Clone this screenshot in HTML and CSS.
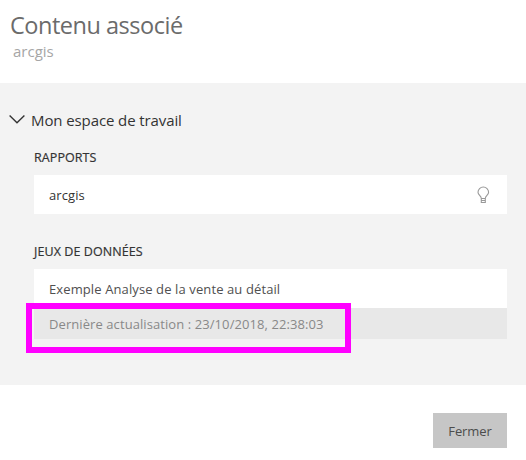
FILE: index.html
```html
<!DOCTYPE html>
<html lang="fr">
<head>
<meta charset="utf-8">
<title>Contenu associé</title>
<link rel="stylesheet" href="styles.css">
</head>
<body>
<div class="dialog">
  <header class="header">
    <h1 class="title"><span>Contenu associé</span></h1>
    <p class="subtitle"><span>arcgis</span></p>
  </header>
  <main class="panel">
    <div class="workspace">
      <svg class="chevron" width="16" height="10" viewBox="0 0 16 10"><path d="M.6.600 8 7.700l7.400-7.100"/></svg>
      <span class="workspace-name">Mon espace de travail</span>
    </div>
    <section class="group">
      <h2 class="group-title reports"><span>RAPPORTS</span></h2>
      <div class="card">
        <span class="report-name">arcgis</span>
        <svg class="bulb" width="13" height="18" viewBox="0 0 13 18"><path d="M4.300 12.500C4.300 9.800 1 9 1 6.300a5.300 5.300 0 0 1 10.600 0c0 2.700-3.300 3.500-3.300 6.200zM4.300 12.500v4h4v-4M4.300 14.500h4"/></svg>
      </div>
    </section>
    <section class="group">
      <h2 class="group-title datasets"><span>JEUX DE DONNÉES</span></h2>
      <div class="card">
        <span class="dataset-name">Exemple Analyse de la vente au détail</span>
      </div>
      <div class="refresh">
        <span class="refresh-text">Dernière actualisation : 23/10/2018, 22:38:03</span>
        <div class="highlight"></div>
      </div>
    </section>
  </main>
  <footer class="footer">
    <button class="close" type="button"><span>Fermer</span></button>
  </footer>
</div>
</body>
</html>
```

FILE: styles.css
```css
* { box-sizing: border-box; }

body {
  margin: 0;
  background: #fff;
  color: #333;
  font-family: "Open Sans", "Noto Sans", sans-serif;
  font-size: 13px;
}

h1, h2, p { margin: 0; font-weight: 400; }

.dialog {
  height: 460px;
  overflow: hidden;
}

.header {
  height: 83px;
  padding: 8px 0 0 10px;
}

.title {
  color: #6b6b6b;
  font-size: 23.5px;
  line-height: 34px;
  letter-spacing: -0.48px;
}

.subtitle {
  padding: 1px 0 0 3px;
  color: #a6a6a6;
  font-size: 15px;
  line-height: 17px;
}

.panel {
  height: 302px;
  padding: 24px 19px 0 9px;
  background: #f3f3f3;
}

.workspace {
  display: flex;
  align-items: center;
  gap: 6px;
  height: 25px;
  font-size: 15px;
  letter-spacing: -0.1px;
}

.chevron {
  fill: none;
  stroke: #333;
  stroke-width: 1.4;
}

.group { padding-left: 25px; }

.group-title {
  height: 43px;
  padding-top: 17px;
  font-size: 12.5px;
  line-height: 18px;
  letter-spacing: 0.08px;
  -webkit-text-stroke: 0.2px #333;
}

.datasets {
  height: 55px;
  padding-top: 29px;
}

.card {
  display: flex;
  align-items: center;
  justify-content: space-between;
  height: 39px;
  padding: 0 17px 0 15px;
  background: #fff;
}

.report-name { letter-spacing: 0.1px; }

.bulb {
  fill: none;
  stroke: #999;
  stroke-width: 1.1;
}

.dataset-name {
  color: #505050;
  letter-spacing: 0.11px;
}

.refresh {
  position: relative;
  display: flex;
  align-items: center;
  height: 31px;
  padding-left: 15px;
  background: #e8e8e8;
  color: #888;
  letter-spacing: 0.08px;
}

.highlight {
  position: absolute;
  top: -5px;
  left: -8px;
  width: 325px;
  height: 50px;
  border: 6px solid #f0f;
}

.footer {
  display: flex;
  justify-content: flex-end;
  padding: 28px 19px 0 0;
}

.close {
  width: 74px;
  height: 35px;
  padding: 0;
  border: 0;
  background: #c6c6c6;
  color: #4c4c4c;
  font: inherit;
  letter-spacing: -0.1px;
}
```
